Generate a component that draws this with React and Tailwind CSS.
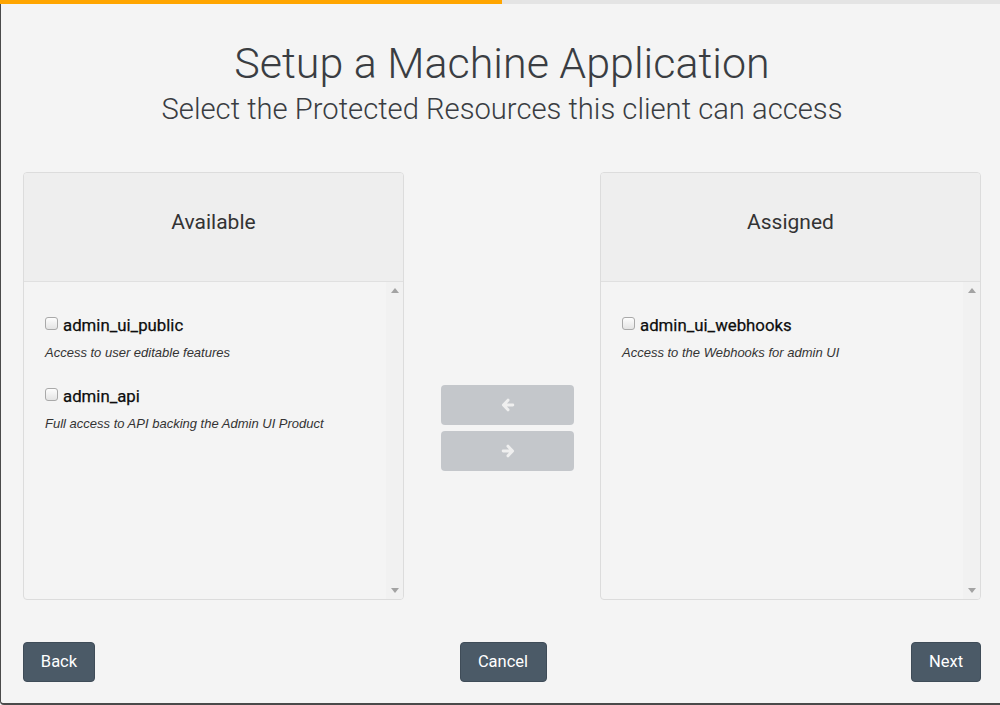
import React from "react";

const available = [
  { id: 1, name: "admin_ui_public", desc: "Access to user editable features" },
  { id: 2, name: "admin_api", desc: "Full access to API backing the Admin UI Product" },
];

const assigned = [
  { id: 3, name: "admin_ui_webhooks", desc: "Access to the Webhooks for admin UI" },
];

// font-awesome style chunky arrow
const Arrow = ({ dir }) => (
  <svg width="14" height="14" viewBox="0 0 16 16" className={dir === "right" ? "rotate-180" : ""}>
    <path d="M8 2.5 L2.8 8 L8 13.5 M3.5 8 H13.5" fill="none" stroke="#efefef" strokeWidth="3.4" strokeLinecap="round" strokeLinejoin="round" />
  </svg>
);

function ResourceItem({ item }) {
  return (
    <div className="h-[71px]">
      <label className="flex items-center gap-[5px]">
        <span className="w-[13px] h-[13px] rounded-[3px] border border-[#a9a9a9] bg-gradient-to-b from-[#fdfdfd] to-[#e4e4e4] shrink-0 -mt-[3px]" />
        <span className="text-[16.8px] text-[#0d0d0d] font-['Roboto',sans-serif] leading-none [-webkit-text-stroke:0.25px_#0d0d0d]">{item.name}</span>
      </label>
      <p className="mt-[12px] text-[13px] italic text-[#333] font-['Liberation_Sans',Arial,sans-serif] leading-none">
        {item.desc}
      </p>
    </div>
  );
}

function ResourcePanel({ title, items }) {
  return (
    <div className="w-[381px] h-[428px] border border-[#dcdcdc] rounded-[4px] flex flex-col overflow-hidden bg-[#f4f4f4]">
      <div className="h-[109px] shrink-0 bg-[#eeeeee] border-b border-[#e0e0e0] flex items-center justify-center">
        <h3 className="text-[21px] text-[#333] font-['Roboto',sans-serif] mb-[8px]">{title}</h3>
      </div>
      <div className="flex flex-1 min-h-0">
        <div className="flex-1 pl-[21px] pt-[35px]">
          {items.map((item) => (
            <ResourceItem key={item.id} item={item} />
          ))}
        </div>
        {/* fake scrollbar */}
        <div className="w-[17px] bg-[#f1f1f1] flex flex-col items-center justify-between py-[6px]">
          <span className="w-0 h-0 border-l-[4px] border-r-[4px] border-b-[5px] border-l-transparent border-r-transparent border-b-[#a3a3a3]" />
          <span className="w-0 h-0 border-l-[4px] border-r-[4px] border-t-[5px] border-l-transparent border-r-transparent border-t-[#a3a3a3]" />
        </div>
      </div>
    </div>
  );
}

export default function App() {
  return (
    <div className="w-[1000px] h-[705px] bg-[#f4f4f4] font-['Roboto',sans-serif] flex flex-col">
      {/* progress bar */}
      <div className="h-[4px] flex shrink-0 bg-[#e4e4e4]">
        <div className="w-[502px] bg-[#ffa500]" />
      </div>

      <div className="flex-1 flex flex-col border-l border-b-2 border-[#4a4a4a] rounded-bl-[4px] pl-[22px] pr-[19px]">
        {/* heading */}
        <div className="text-center text-[#3a3d42] pt-[32px]">
          <h1 className="text-[43px] font-light leading-[54px]">Setup a Machine Application</h1>
          <h2 className="text-[29.2px] font-light leading-[38px]">Select the Protected Resources this client can access</h2>
        </div>

        {/* pickers */}
        <div className="flex mt-[44px]">
          <ResourcePanel title="Available" items={available} />
          <div className="flex-1 pl-[37px] pr-[26px] pt-[213px] flex flex-col gap-[6px]">
            <button className="h-[40px] rounded-[4px] bg-[#c4c7cb] flex items-center justify-center">
              <Arrow dir="left" />
            </button>
            <button className="h-[40px] rounded-[4px] bg-[#c4c7cb] flex items-center justify-center">
              <Arrow dir="right" />
            </button>
          </div>
          <ResourcePanel title="Assigned" items={assigned} />
        </div>

        {/* footer */}
        <div className="flex items-center justify-between mt-[42px]">
          <button className="h-[40px] w-[72px] rounded-[4px] bg-[#4b5a67] border border-[#3f4c58] text-white text-[16.5px]">Back</button>
          <button className="h-[40px] w-[87px] rounded-[4px] bg-[#4b5a67] border border-[#3f4c58] text-white text-[16.5px]">Cancel</button>
          <button className="h-[40px] w-[70px] rounded-[4px] bg-[#4b5a67] border border-[#3f4c58] text-white text-[16.5px]">Next</button>
        </div>
      </div>
    </div>
  );
}
